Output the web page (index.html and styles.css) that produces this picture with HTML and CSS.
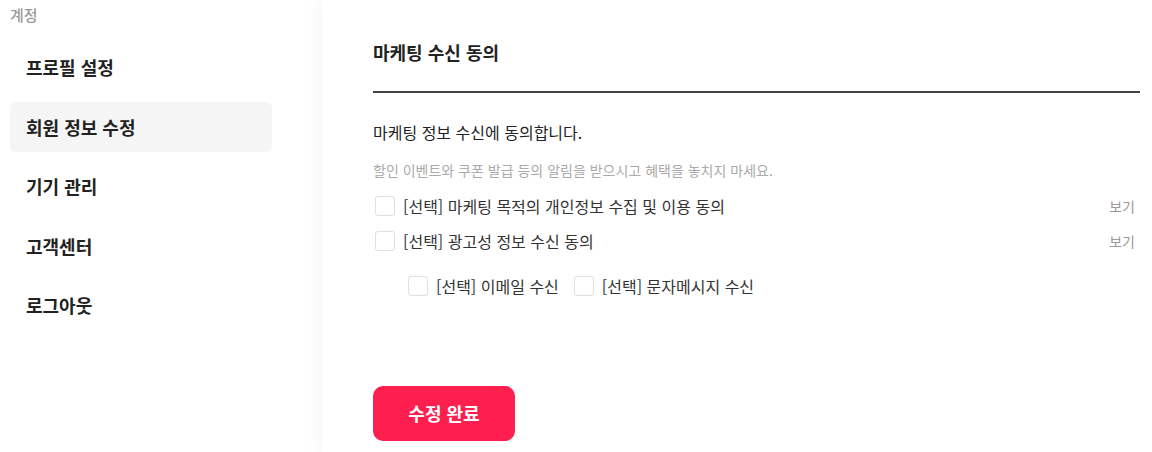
FILE: index.html
```html
<!DOCTYPE html>
<html lang="ko">

<head>
    <meta charset="UTF-8" />
    <meta name="viewport" content="width=device-width, initial-scale=1.0" />
    <title>회원 정보 수정</title>
    <link rel="stylesheet" href="styles.css">
</head>

<body>
    <div class="layout">
        <aside class="sidebar">
            <p class="side-title">계정</p>
            <ul class="side-menu">
                <li class="menu-item">프로필 설정</li>
                <li class="menu-item active">회원 정보 수정</li>
                <li class="menu-item">기기 관리</li>
                <li class="menu-item">고객센터</li>
                <li class="menu-item">로그아웃</li>
            </ul>
        </aside>

        <main class="content">
            <h2 class="section-title">마케팅 수신 동의</h2>

            <p class="agree-text">마케팅 정보 수신에 동의합니다.</p>
            <p class="agree-sub">할인 이벤트와 쿠폰 발급 등의 알림을 받으시고 혜택을 놓치지 마세요.</p>

            <div class="check-row">
                <label class="check"><span class="box"></span>[선택] 마케팅 목적의 개인정보 수집 및 이용 동의</label>
                <a class="view-link">보기</a>
            </div>
            <div class="check-row">
                <label class="check"><span class="box"></span>[선택] 광고성 정보 수신 동의</label>
                <a class="view-link">보기</a>
            </div>
            <div class="check-row sub-row">
                <label class="check"><span class="box"></span>[선택] 이메일 수신</label>
                <label class="check"><span class="box"></span>[선택] 문자메시지 수신</label>
            </div>

            <button class="submit-btn">수정 완료</button>
        </main>
    </div>
</body>

</html>
```

FILE: styles.css
```css
* {
    box-sizing: border-box;
}

body {
    margin: 0;
    font-family: "Noto Sans CJK KR", "Noto Sans", sans-serif;
    color: #222;
    background: #fff;
}

.layout {
    display: flex;
    height: 452px;
    overflow: hidden;
}

.sidebar {
    width: 322px;
    flex-shrink: 0;
    padding: 4px 0 0 10px;
    background: #fff;
}

.side-title {
    margin: 0;
    font-size: 15px;
    line-height: 22px;
    font-weight: 500;
    color: #999;
}

.side-menu {
    list-style: none;
    margin: 16px 0 0;
    padding: 0;
    display: flex;
    flex-direction: column;
    gap: 9.5px;
}

.menu-item {
    width: 262px;
    height: 50px;
    padding-left: 16px;
    display: flex;
    align-items: center;
    font-size: 18px;
    font-weight: 700;
    color: #222;
    border-radius: 6px;
}

.menu-item.active {
    background: #f5f5f5;
}

.content {
    flex: 1;
    padding: 40px 12px 0 51px;
    background: #fff;
    box-shadow: -6px 0 12px rgba(0, 0, 0, 0.03);
    position: relative;
}

.section-title {
    margin: 0;
    font-size: 18px;
    line-height: 24px;
    font-weight: 700;
    padding-bottom: 27px;
    border-bottom: 2px solid #444;
}

.agree-text {
    margin: 28px 0 0;
    font-size: 16px;
    line-height: 22px;
    color: #222;
}

.agree-sub {
    margin: 17px 0 0;
    font-size: 14px;
    line-height: 20px;
    color: #aaa;
}

.check-row {
    display: flex;
    align-items: center;
    justify-content: space-between;
    height: 35px;
}

.agree-sub + .check-row {
    margin-top: 8.5px;
}

.sub-row {
    justify-content: flex-start;
    gap: 13px;
    margin-top: 10px;
    padding-left: 33px;
}

.check {
    display: flex;
    align-items: center;
    gap: 8px;
    font-size: 16px;
    color: #333;
}

.box {
    width: 20px;
    height: 20px;
    margin-left: 2px;
    border: 1px solid #e0e0e0;
    border-radius: 3px;
    background: #fff;
}

.view-link {
    font-size: 14px;
    color: #999;
    margin-right: 5px;
}

.submit-btn {
    margin-top: 82px;
    width: 142px;
    height: 55px;
    border: none;
    border-radius: 10px;
    background: #ff1f4f;
    color: #fff;
    font-family: inherit;
    font-size: 18px;
    font-weight: 700;
}
```
